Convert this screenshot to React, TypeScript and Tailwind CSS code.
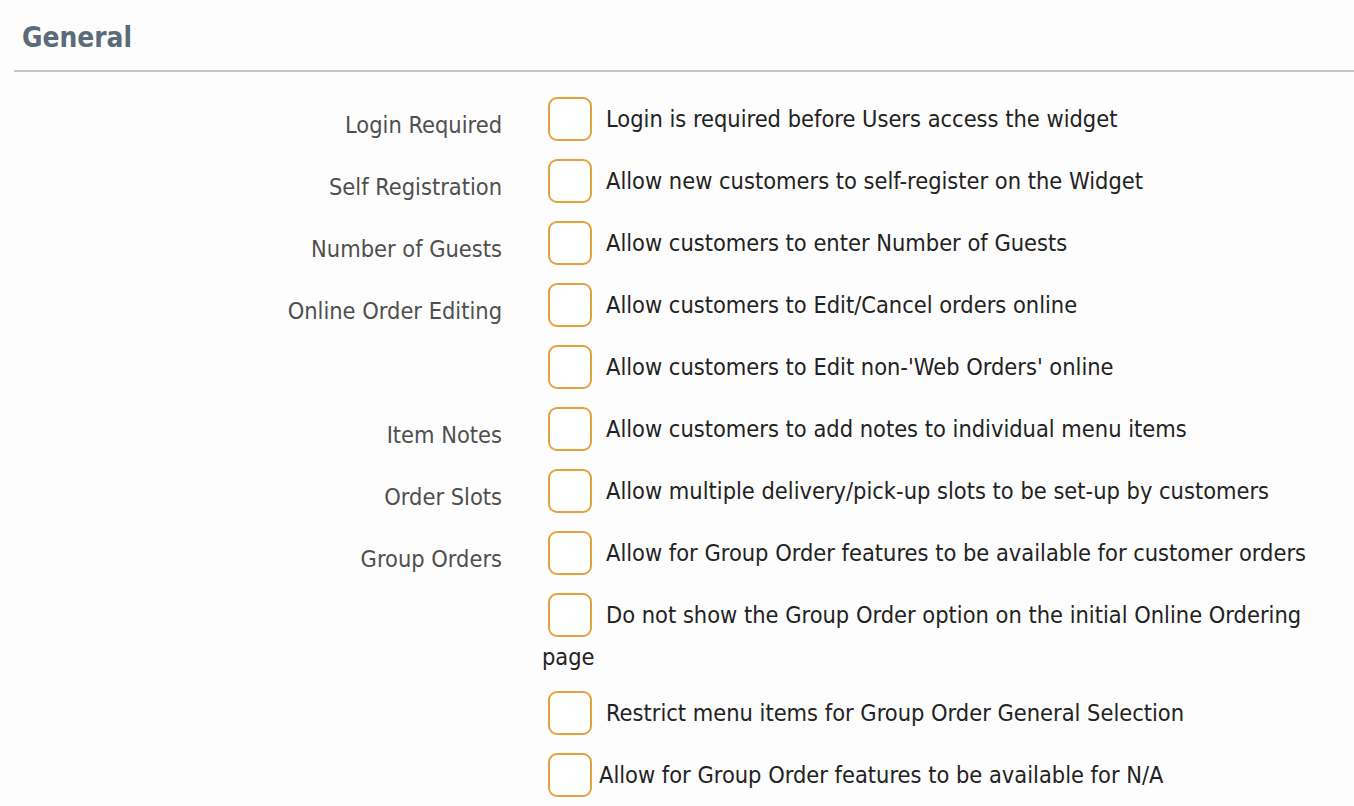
import React from 'react'

interface Option {
    label?: string;
    text: string;
    tight?: boolean;
}

const options: Option[] = [
    { label: 'Login Required', text: 'Login is required before Users access the widget' },
    { label: 'Self Registration', text: 'Allow new customers to self-register on the Widget' },
    { label: 'Number of Guests', text: 'Allow customers to enter Number of Guests' },
    { label: 'Online Order Editing', text: 'Allow customers to Edit/Cancel orders online' },
    { text: "Allow customers to Edit non-'Web Orders' online" },
    { label: 'Item Notes', text: 'Allow customers to add notes to individual menu items' },
    { label: 'Order Slots', text: 'Allow multiple delivery/pick-up slots to be set-up by customers' },
    { label: 'Group Orders', text: 'Allow for Group Order features to be available for customer orders' },
    { text: 'Do not show the Group Order option on the initial Online Ordering page' },
    { text: 'Restrict menu items for Group Order General Selection' },
    { text: 'Allow for Group Order features to be available for N/A', tight: true },
]

const App = () => {
    return (
        <div className="min-h-screen bg-[#fdfdfd] font-['DejaVu_Sans_Condensed','DejaVu_Sans',sans-serif]">
            <h2 className="pl-[22px] pt-[20px] pb-[14px] text-[27.8px] leading-[36px] font-bold text-[#5a6b79]">General</h2>
            <div className="ml-[14px] h-[2px] bg-[#c6c6c6]" />
            <div className="pt-[23px]">
                {options.map((o, i) => (
                    <div key={i} className="flex mb-[14px]">
                        <div className="w-[502px] shrink-0 pt-[12px] text-right text-[23.4px] leading-[36px] text-[#4f4f4f]">
                            {o.label}
                        </div>
                        <div className="ml-[40px] w-[776px] text-[23.4px] leading-[34.5px] text-[#222]">
                            <span className={`inline-block align-middle w-[44px] h-[44px] my-[2px] ml-[6px] rounded-[9px] border-2 border-[#e4a23f] bg-white ${o.tight ? 'mr-[7px]' : 'mr-[14px]'}`} />
                            <span className="align-middle">{o.text}</span>
                        </div>
                    </div>
                ))}
            </div>
        </div>
    )
}

export default App
